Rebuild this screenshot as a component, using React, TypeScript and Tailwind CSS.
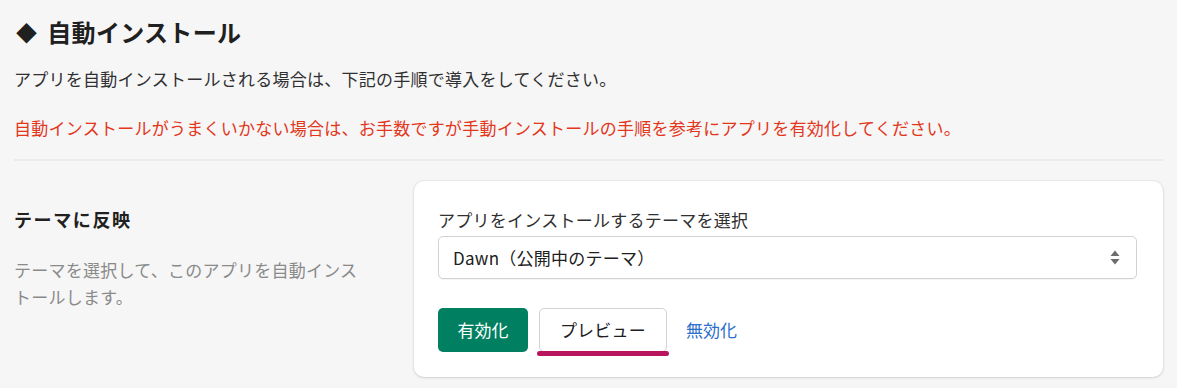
import React from "react";

const font = { fontFamily: '"Noto Sans CJK JP", "Noto Sans", sans-serif' };

export default function App() {
  return (
    <div
      className="w-[1177px] h-[388px] overflow-hidden bg-[#f6f6f6] px-[14px] pt-[14px] text-[#303030]"
      style={font}
    >
      <h1 className="flex items-center text-[24px] leading-[36px] font-bold text-[#202020] tracking-[0.3px]">
        <span className="mr-[10px] ml-[2px] text-[21px]">◆</span>
        <span>自動インストール</span>
      </h1>
      <p className="mt-[15px] text-[17px] leading-[27px] text-[#303030] tracking-[0.25px]">
        アプリを自動インストールされる場合は、下記の手順で導入をしてください。
      </p>
      <p className="mt-[22px] text-[17px] leading-[27px] text-[#e3371c] tracking-[0.25px]">
        自動インストールがうまくいかない場合は、お手数ですが手動インストールの手順を参考にアプリを有効化してください。
      </p>
      <div className="mt-[18px] h-[2px] bg-[#ebebeb]" />
      <div className="mt-[20px] flex">
        <div className="w-[400px] shrink-0 pt-[25px]">
          <h2 className="text-[18px] leading-[27px] font-bold text-[#202020] tracking-[1.6px]">
            テーマに反映
          </h2>
          <p className="mt-[23px] w-[352px] text-[17px] leading-[27px] text-[#8a8a8a] tracking-[0.25px]">
            テーマを選択して、このアプリを自動インストールします。
          </p>
        </div>
        <div className="flex-1 rounded-[10px] bg-white pl-6 pr-[26px] pt-[25px] pb-[25px] shadow-[0_0_0_1px_rgba(63,63,68,0.05),0_1px_3px_rgba(63,63,68,0.15)]">
          <label className="block text-[17px] leading-[27px] text-[#303030] tracking-[0.25px]">
            アプリをインストールするテーマを選択
          </label>
          <div className="mt-[3px] flex h-[43px] items-center justify-between rounded-[5px] border border-[#d2d2d2] bg-white pl-[14px] pr-[16px] shadow-[0_1px_0_rgba(0,0,0,0.04)]">
            <span className="text-[17px] text-[#202020] tracking-[0.25px]">Dawn（公開中のテーマ）</span>
            <svg width="10" height="15" viewBox="0 0 10 15" className="text-[#6d6d6d]">
              <path d="M5 0.5 L9.5 6 L0.5 6 Z" fill="currentColor" />
              <path d="M0.5 9 L9.5 9 L5 14.5 Z" fill="currentColor" />
            </svg>
          </div>
          <div className="mt-[29px] flex items-center">
            <button className="flex h-[44px] w-[90px] items-center justify-center rounded-[5px] bg-[#008060] text-[17px] text-white">
              有効化
            </button>
            <div className="relative ml-[11px]">
              <button className="flex h-[44px] w-[128px] items-center justify-center rounded-[5px] border border-[#d2d2d2] bg-white text-[17px] text-[#202020] tracking-[0.25px]">
                プレビュー
              </button>
              <div className="absolute left-[-2px] right-[-2px] top-[43px] h-[5px] rounded-full bg-[#b9155f]" />
            </div>
            <a className="ml-[19px] text-[17px] text-[#2c6ecb]">無効化</a>
          </div>
        </div>
      </div>
    </div>
  );
}
